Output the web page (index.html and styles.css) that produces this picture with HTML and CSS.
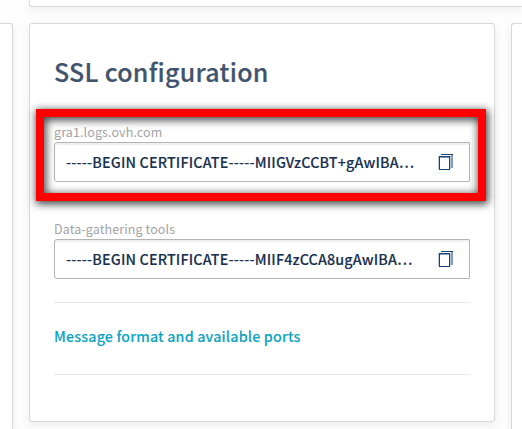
FILE: index.html
```html
<!DOCTYPE html>
<html lang="en">
<head>
<meta charset="utf-8">
<title>SSL configuration</title>
<link rel="stylesheet" href="styles.css">
</head>
<body>
<div class="board">
  <section class="card card-top"></section>
  <section class="card card-left"></section>
  <section class="card card-main">
    <h2 class="title">SSL configuration</h2>
    <div class="field">
      <div class="label">gra1.logs.ovh.com</div>
      <div class="box">
        <span class="value">-----BEGIN CERTIFICATE-----MIIGVzCCBT+gAwIBA…</span>
        <svg class="copy" width="15" height="17" viewBox="0 0 15 17" shape-rendering="crispEdges"><path class="back" d="M13 1h2v13h-2z"/><path class="ink" d="M3 0h12v1H3z"/><path class="shade" d="M0 2h1v13H0zM12 2h1v13h-1z"/><path class="ink" fill-rule="evenodd" d="M1 2h11v14H1zM2 4v11h9V4z"/><path class="mid" d="M2 3h9v1H2z"/></svg>
      </div>
      <div class="highlight"></div>
    </div>
    <div class="field">
      <div class="label">Data-gathering tools</div>
      <div class="box">
        <span class="value">-----BEGIN CERTIFICATE-----MIIF4zCCA8ugAwIBA…</span>
        <svg class="copy" width="15" height="17" viewBox="0 0 15 17" shape-rendering="crispEdges"><path class="back" d="M13 1h2v13h-2z"/><path class="ink" d="M3 0h12v1H3z"/><path class="shade" d="M0 2h1v13H0zM12 2h1v13h-1z"/><path class="ink" fill-rule="evenodd" d="M1 2h11v14H1zM2 4v11h9V4z"/><path class="mid" d="M2 3h9v1H2z"/></svg>
      </div>
    </div>
    <div class="link-row"><a class="link">Message format and available ports</a></div>
  </section>
  <section class="card card-right"></section>
</div>
</body>
</html>
```

FILE: styles.css
```css
* { box-sizing: border-box; }
body {
  margin: 0;
  background: #fdfdfd;
  font-family: "Noto Sans CJK SC", "Open Sans", sans-serif;
  overflow: hidden;
}
.board {
  display: grid;
  grid-template-columns: 13px 466px 11px;
  grid-template-rows: 7px 422px;
  column-gap: 16px;
  height: 429px;
  overflow: hidden;
}
.card {
  background: #fff;
  border: 1px solid #d9d9da;
  border-radius: 3px;
  box-shadow: 0 3px 8px rgba(0, 0, 0, .07);
}
.card-top { grid-column: 2 / 4; border-top: 0; border-right: 0; border-radius: 0 0 0 3px; }
.card-left { grid-column: 1; grid-row: 2; margin-top: 16px; border-left: 0; border-bottom: 0; border-radius: 0 3px 0 0; }
.card-main { grid-column: 2; grid-row: 2; margin-top: 16px; height: 399px; padding: 29px 24px 0; }
.card-right { grid-column: 3; grid-row: 2; margin-top: 16px; border-right: 0; border-bottom: 0; border-radius: 3px 0 0 0; }
.title {
  margin: 0 0 34px;
  height: 36px;
  font-size: 25px;
  line-height: 36px;
  font-weight: 500;
  letter-spacing: .27px;
  -webkit-text-stroke: .2px #42546d;
  color: #42546d;
  white-space: nowrap;
}
.field { position: relative; height: 59px; margin-bottom: 38px; }
.label {
  height: 19px;
  font-size: 12.5px;
  line-height: 18px;
  letter-spacing: .11px;
  color: #a3a3a3;
  white-space: nowrap;
}
.box {
  display: flex;
  align-items: center;
  justify-content: space-between;
  height: 40px;
  padding: 0 16px 0 11px;
  border: 1px solid #b5b5b5;
  border-radius: 3px 1px 1px 3px;
  box-shadow: inset 0 2px 0 #f0f0f1;
}
.value {
  font-size: 14.3px;
  font-weight: 500;
  line-height: 20px;
  letter-spacing: .16px;
  -webkit-text-stroke: .12px #19304f;
  color: #19304f;
  white-space: nowrap;
}
.copy { flex: none; }
.ink { fill: #174374; }
.back { fill: #829db9; }
.shade { fill: #b7c7d7; }
.mid { fill: #829db9; }
.highlight {
  position: absolute;
  left: -18px;
  top: -14px;
  width: 450px;
  height: 92px;
  border: 8px solid #f00;
  box-shadow: 1px 2px 8px 1px rgba(0, 0, 0, .75), inset 1px 2px 8px 1px rgba(0, 0, 0, .75);
}
.field + .link-row { margin-top: -15px; }
.link-row {
  height: 73px;
  padding-top: 22px;
  border-top: 1px solid #e8e8e8;
  border-bottom: 1px solid #e8e8e8;
}
.link {
  display: block;
  font-size: 14.3px;
  line-height: 22px;
  font-weight: 500;
  letter-spacing: .15px;
  -webkit-text-stroke: .1px #0fa4c0;
  color: #0fa4c0;
  white-space: nowrap;
}
```
